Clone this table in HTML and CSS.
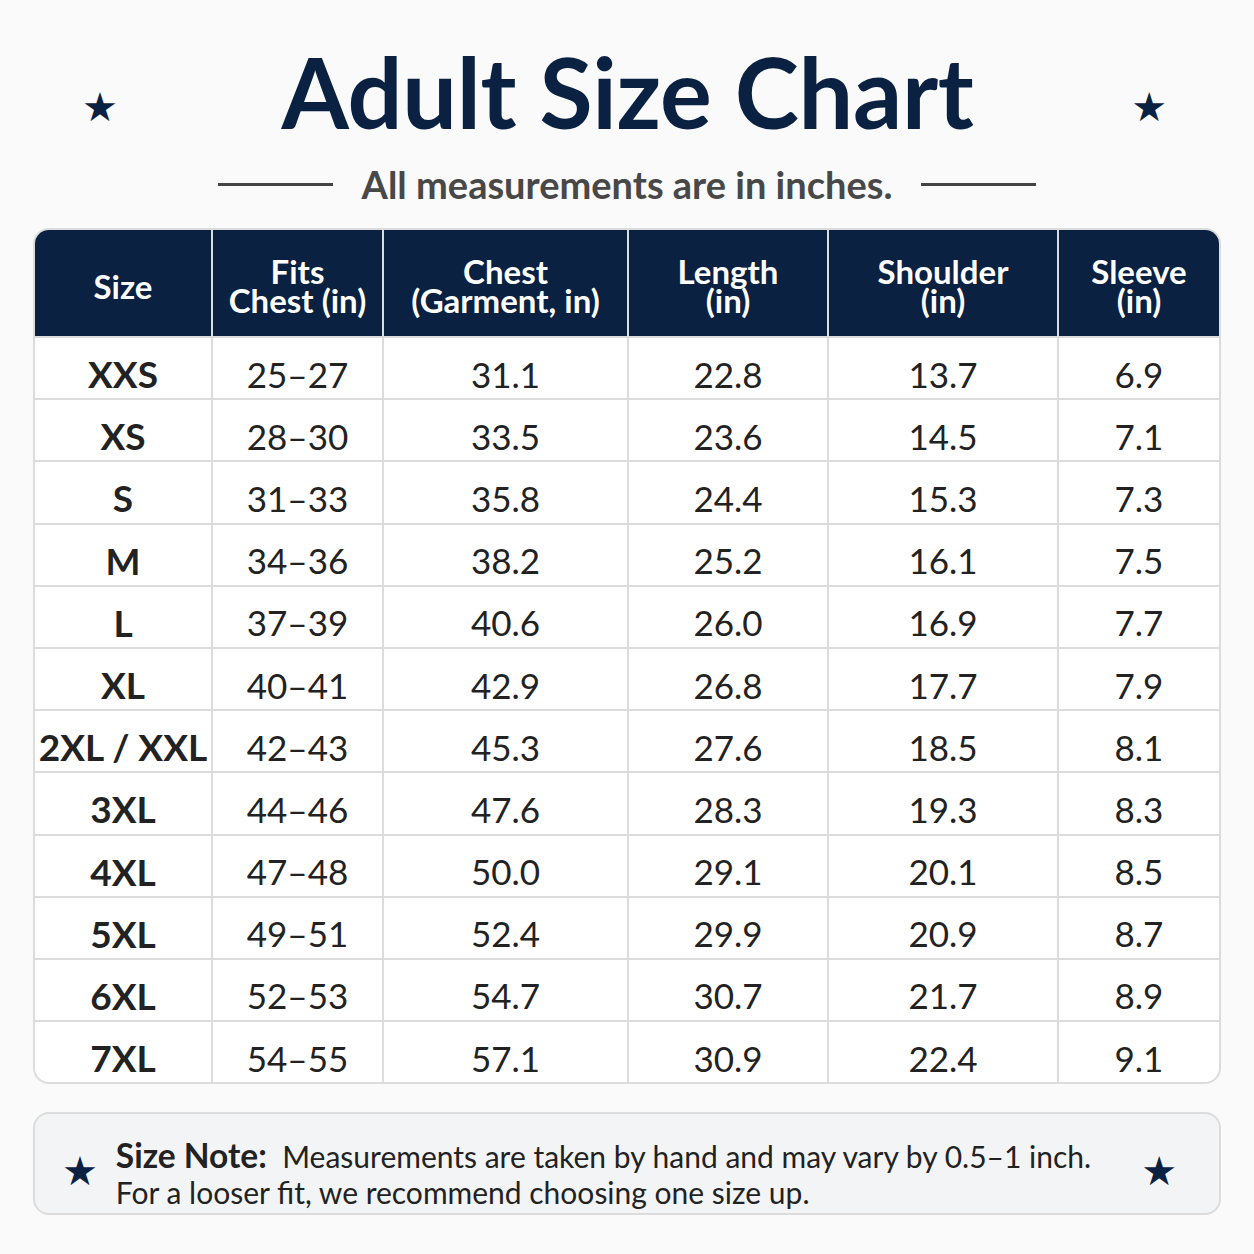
FILE: index.html
```html
<!DOCTYPE html>
<html lang="en">
<head>
<meta charset="utf-8">
<title>Adult Size Chart</title>
<link rel="stylesheet" href="styles.css">
</head>
<body>
<div class="page">
  <header class="head">
    <span class="star star-top">★</span>
    <h1 class="title">Adult Size Chart</h1>
    <span class="star star-top">★</span>
  </header>
  <div class="sub">
    <span class="rule"></span>
    <span class="sub-text">All measurements are in inches.</span>
    <span class="rule"></span>
  </div>
  <div class="chart">
    <div class="hc">Size</div>
    <div class="hc">Fits<br>Chest (in)</div>
    <div class="hc">Chest<br>(Garment, in)</div>
    <div class="hc">Length<br>(in)</div>
    <div class="hc">Shoulder<br>(in)</div>
    <div class="hc">Sleeve<br>(in)</div>

    <div class="c sz">XXS</div><div class="c">25–27</div><div class="c">31.1</div><div class="c">22.8</div><div class="c">13.7</div><div class="c">6.9</div>
    <div class="c sz">XS</div><div class="c">28–30</div><div class="c">33.5</div><div class="c">23.6</div><div class="c">14.5</div><div class="c">7.1</div>
    <div class="c sz">S</div><div class="c">31–33</div><div class="c">35.8</div><div class="c">24.4</div><div class="c">15.3</div><div class="c">7.3</div>
    <div class="c sz">M</div><div class="c">34–36</div><div class="c">38.2</div><div class="c">25.2</div><div class="c">16.1</div><div class="c">7.5</div>
    <div class="c sz">L</div><div class="c">37–39</div><div class="c">40.6</div><div class="c">26.0</div><div class="c">16.9</div><div class="c">7.7</div>
    <div class="c sz">XL</div><div class="c">40–41</div><div class="c">42.9</div><div class="c">26.8</div><div class="c">17.7</div><div class="c">7.9</div>
    <div class="c sz">2XL / XXL</div><div class="c">42–43</div><div class="c">45.3</div><div class="c">27.6</div><div class="c">18.5</div><div class="c">8.1</div>
    <div class="c sz">3XL</div><div class="c">44–46</div><div class="c">47.6</div><div class="c">28.3</div><div class="c">19.3</div><div class="c">8.3</div>
    <div class="c sz">4XL</div><div class="c">47–48</div><div class="c">50.0</div><div class="c">29.1</div><div class="c">20.1</div><div class="c">8.5</div>
    <div class="c sz">5XL</div><div class="c">49–51</div><div class="c">52.4</div><div class="c">29.9</div><div class="c">20.9</div><div class="c">8.7</div>
    <div class="c sz">6XL</div><div class="c">52–53</div><div class="c">54.7</div><div class="c">30.7</div><div class="c">21.7</div><div class="c">8.9</div>
    <div class="c sz">7XL</div><div class="c">54–55</div><div class="c">57.1</div><div class="c">30.9</div><div class="c">22.4</div><div class="c">9.1</div>
  </div>
  <div class="note">
    <span class="star star-note">★</span>
    <p class="note-text"><b>Size Note:</b>&nbsp; Measurements are taken by hand and may vary by 0.5–1 inch.<br>For a looser fit, we recommend choosing one size up.</p>
    <span class="star star-note">★</span>
  </div>
</div>
</body>
</html>
```
FILE: styles.css
```css
* { box-sizing: border-box; }
html, body { margin: 0; padding: 0; }
body {
  background: #fafafa;
  font-family: Lato, "Open Sans", "DejaVu Sans", sans-serif;
  color: #222;
}
.page {
  width: 1254px;
  height: 1254px;
  padding: 34px 33px 0;
}
.head {
  display: flex;
  align-items: center;
  justify-content: space-between;
  padding: 0 54px 0 49px;
}
.title {
  margin: 0 0 0 6px;
  font-size: 97px;
  line-height: 116px;
  font-weight: 700;
  color: #0a2142;
  letter-spacing: -0.3px;
}
.star { color: #0a2142; line-height: 1; }
.star-top { font-size: 40px; margin-top: 28px; }
.sub {
  display: flex;
  align-items: center;
  justify-content: center;
  gap: 29px;
  margin-top: 2px;
  height: 66px;
  padding-bottom: 2px;
}
.rule {
  width: 115px;
  height: 3px;
  background: #444;
}
.sub-text {
  font-size: 38px;
  font-weight: 700;
  color: #484848;
}
.chart {
  display: grid;
  grid-template-columns: 176px 169px 243px 198px 228px 160px;
  grid-template-rows: 106px repeat(12, 60.2px);
  gap: 2px;
  background: #dcdcdc;
  border: 2px solid #dcdcdc;
  border-radius: 16px;
  overflow: hidden;
  margin-top: 10px;
}
.hc {
  background: #0a2142;
  color: #fff;
  font-weight: 700;
  font-size: 33px;
  line-height: 29px;
  display: flex;
  align-items: center;
  justify-content: center;
  text-align: center;
  padding-top: 6px;
}
.c {
  background: #fff;
  font-size: 35px;
  display: flex;
  align-items: center;
  justify-content: center;
  padding-top: 11px;
  color: #222;
}
.sz { font-weight: 700; font-size: 37px; white-space: nowrap; }
.note {
  margin-top: 28px;
  height: 103px;
  background: #f3f4f6;
  border: 2px solid #dcdcdc;
  border-radius: 16px;
  display: flex;
  align-items: center;
  padding: 0 42px 0 27px;
  gap: 18px;
}
.star-note { font-size: 40px; margin-top: 12px; }
.note-text {
  margin: 0;
  flex: 1;
  font-size: 30px;
  line-height: 36px;
  color: #222;
  padding-top: 20px;
}
.note-text b { font-weight: 700; font-size: 33.5px; }
```
